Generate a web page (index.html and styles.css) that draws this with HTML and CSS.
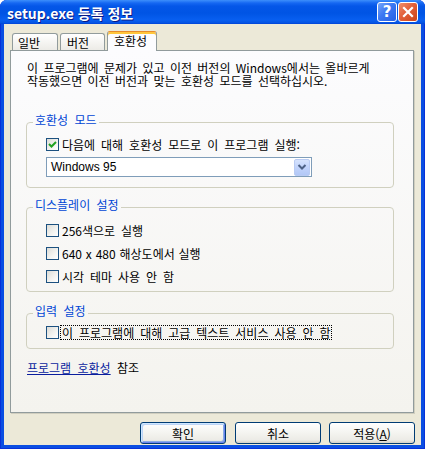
FILE: index.html
```html
<!DOCTYPE html>
<html lang="ko">
<head>
<meta charset="utf-8">
<title>setup.exe 등록 정보</title>
<link rel="stylesheet" href="styles.css">
</head>
<body>
<div class="window">
  <div class="titlebar">
    <span class="title">setup.exe 등록 정보</span>
    <div class="caption-btns">
      <span class="cbtn help">?</span>
      <span class="cbtn close"><svg width="14" height="14" viewBox="0 0 14 14"><path d="M3 3 L11 11 M11 3 L3 11" stroke="#fff" stroke-width="2.2" stroke-linecap="square"/></svg></span>
    </div>
  </div>
  <div class="client">
    <div class="tabs">
      <div class="tab t1">일반</div>
      <div class="tab t2">버전</div>
      <div class="tab active">호환성</div>
    </div>
    <div class="panel">
      <p class="intro">이 프로그램에 문제가 있고 이전 버전의 Windows에서는 올바르게<br>작동했으면 이전 버전과 맞는 호환성 모드를 선택하십시오.</p>

      <fieldset class="group g1">
        <legend>호환성 모드</legend>
        <div class="check">
          <span class="box checked"><svg width="11" height="11" viewBox="0 0 11 11"><path d="M2 5 L4.5 7.5 L9 3" fill="none" stroke="#21A121" stroke-width="2"/></svg></span>
          <span class="lbl">다음에 대해 호환성 모드로 이 프로그램 실행:</span>
        </div>
        <div class="select">
          <span class="sel-text">Windows 95</span>
          <span class="drop"><svg width="10" height="8" viewBox="0 0 10 8"><path d="M1.5 2 L5 5.5 L8.5 2" fill="none" stroke="#4D6185" stroke-width="2"/></svg></span>
        </div>
      </fieldset>

      <fieldset class="group g2">
        <legend>디스플레이 설정</legend>
        <div class="check"><span class="box"></span><span class="lbl">256색으로 실행</span></div>
        <div class="check"><span class="box"></span><span class="lbl tight">640 x 480 해상도에서 실행</span></div>
        <div class="check"><span class="box"></span><span class="lbl">시각 테마 사용 안 함</span></div>
      </fieldset>

      <fieldset class="group g3">
        <legend>입력 설정</legend>
        <div class="check"><span class="box"></span><span class="lbl focus">이 프로그램에 대해 고급 텍스트 서비스 사용 안 함</span></div>
      </fieldset>

      <p class="seealso"><a class="link">프로그램 호환성</a> 참조</p>
    </div>
    <div class="buttons">
      <button class="btn default">확인</button>
      <button class="btn">취소</button>
      <button class="btn">적용(<u>A</u>)</button>
    </div>
  </div>
</div>
</body>
</html>
```

FILE: styles.css
```css
* { box-sizing: border-box; }

body {
  margin: 0;
  background: #ffffff;
  font-family: "Noto Sans CJK KR", "Noto Sans", sans-serif;
  font-size: 12px;
  color: #000;
}

.window {
  width: 425px;
  height: 449px;
  background: #0A4EE2;
  border-radius: 7px 7px 0 0;
  overflow: hidden;
  display: flex;
  flex-direction: column;
  box-shadow: inset 1px 0 0 #0831D9, inset -1px 0 0 #0831D9, inset 0 -1px 0 #0831D9;
}

.titlebar {
  height: 24px;
  flex: none;
  display: flex;
  align-items: center;
  justify-content: space-between;
  padding: 0 7px 0 7px;
  background: linear-gradient(to bottom, #3D8FFB 0px, #1668F2 3px, #0557E8 6px, #0054E4 13px, #085FF0 20px, #0453E2 23px, #003FD4 24px);
}

.title {
  color: #fff;
  font-weight: bold;
  font-size: 14px;
  line-height: 16px;
  text-shadow: 1px 1px 0 #0A1883;
  padding-top: 1px;
}

.caption-btns {
  display: flex;
  gap: 1px;
}

.cbtn {
  width: 20px;
  height: 20px;
  border: 1px solid #fff;
  border-radius: 3px;
  display: flex;
  align-items: center;
  justify-content: center;
  color: #fff;
}

.help {
  background: linear-gradient(135deg, #76A6FB 0%, #3C78F2 45%, #2460E6 100%);
  font-family: "DejaVu Sans", sans-serif;
  font-weight: bold;
  font-size: 15px;
  line-height: 18px;
}

.close {
  background: linear-gradient(135deg, #EE8E6C 0%, #E2603A 45%, #CC4419 100%);
}

.client {
  flex: 1;
  margin: 0 4px 4px 4px;
  background: #ECE9D8;
  display: flex;
  flex-direction: column;
}

.tabs {
  height: 26px;
  flex: none;
  display: flex;
  align-items: flex-end;
  padding: 7px 0 0 8px;
}

.tab {
  height: 17px;
  border: 1px solid #919B9C;
  border-bottom: none;
  border-radius: 3px 3px 0 0;
  background: linear-gradient(to bottom, #FFFFFF, #ECEBE6);
  line-height: 13px;
  padding: 2px 0 0 6px;
  margin-right: 2px;
}

.t1 { width: 46px; padding-left: 5px; }
.t2 { width: 45px; }

.tab.active {
  width: 50px;
  height: 20px;
  margin-bottom: -1px;
  margin-right: 0;
  position: relative;
  z-index: 1;
  background: #FCFCFE;
  border-top: 1px solid #E68B2C;
  box-shadow: inset 0 2px 0 #FFC73C;
  padding-top: 2px;
}

.panel {
  height: 363px;
  flex: none;
  margin: 0 7px 0 6px;
  border: 1px solid #919B9C;
  background: linear-gradient(to bottom, #FCFCFE, #F4F3EE);
  box-shadow: 1px 1px 0 #D0CEBF;
  padding: 10px 0 0 15px;
}

.intro {
  margin: 0 0 0 1px;
  line-height: 13px;
  word-spacing: 2px;
}

.group {
  width: 368px;
  margin: 0;
  border: 1px solid #D0D0BF;
  border-radius: 4px;
  padding: 0 0 0 19px;
  min-width: 0;
}

.group legend {
  margin-left: -13px;
  padding: 0 2px 4px 2px;
  line-height: 14px;
  color: #0046D5;
  word-spacing: 3px;
}

.g1 { margin-top: 26px; padding-top: 7px; padding-bottom: 10px; }
.g2 { margin-top: 10px; padding-top: 8px; padding-bottom: 8px; }
.g3 { margin-top: 12px; padding-top: 4px; padding-bottom: 9px; }

.check {
  height: 13px;
  display: flex;
  align-items: center;
  gap: 2px;
}

.check + .check { margin-top: 10px; }

.box {
  width: 13px;
  height: 13px;
  flex: none;
  border: 1px solid #1C5180;
  background: linear-gradient(135deg, #DCDCD7 0%, #F4F4F1 60%, #FFFFFF 100%);
  display: flex;
  align-items: center;
  justify-content: center;
}

.lbl {
  line-height: 13px;
  padding: 0 1px;
  white-space: nowrap;
  word-spacing: 2.6px;
}

.lbl.tight { word-spacing: 0.5px; }

.focus {
  outline: 1px dotted #000;
}

.select {
  width: 266px;
  height: 20px;
  margin-top: 6px;
  border: 1px solid #7F9DB9;
  background: #fff;
  display: flex;
  align-items: center;
  justify-content: space-between;
  padding: 0 1px 0 4px;
}

.sel-text {
  line-height: 13px;
  font-family: "Liberation Sans", "Noto Sans CJK KR", sans-serif;
}

.drop {
  width: 16px;
  height: 17px;
  border: 1px solid #B9CBF3;
  border-radius: 2px;
  background: linear-gradient(to bottom, #D6E3FD 0%, #C1D3FB 50%, #B2C8F6 100%);
  display: flex;
  align-items: center;
  justify-content: center;
}

.seealso {
  margin: 12px 0 0 1px;
  line-height: 13px;
  word-spacing: 3px;
}

.link {
  color: #0A1E9E;
  text-decoration: underline;
}

.buttons {
  display: flex;
  justify-content: flex-end;
  gap: 8px;
  padding: 9px 6px 0 0;
}

.btn {
  width: 86px;
  height: 22px;
  border: 1px solid #003C74;
  border-radius: 3px;
  background: linear-gradient(to bottom, #FFFFFF 0%, #F5F5F1 45%, #ECEBE6 85%, #D6D0C5 100%);
  font-family: "Noto Sans CJK KR", "Noto Sans", sans-serif;
  font-size: 12px;
  line-height: 13px;
  color: #000;
  padding: 0;
}

.btn.default {
  margin-right: 1px;
  box-shadow: inset 1px 1px 0 #CEE7FF, inset -1px -1px 0 #6982EE, inset 2px 2px 0 #BCD4F6, inset -2px -2px 0 #89ADE4;
}
```
